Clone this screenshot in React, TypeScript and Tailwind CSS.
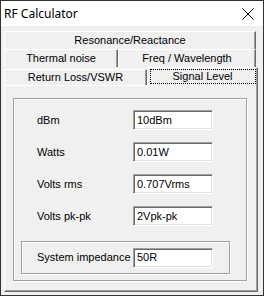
import type { ReactNode } from 'react';

const font = { fontFamily: '"Liberation Sans", Arial, sans-serif' };

function Tab({ children, className = '' }: { children: ReactNode; className?: string }) {
  return (
    <div
      className={`flex items-center justify-center border-l border-t border-r border-l-white border-t-white border-r-[#696969] bg-[#f0f0f0] text-[11px] leading-none text-black shadow-[inset_-1px_0_0_#a0a0a0] ${className}`}
    >
      {children}
    </div>
  );
}

function Field({ value }: { value: string }) {
  return (
    <div className="flex h-[20px] w-[80px] items-center border border-t-[#a0a0a0] border-l-[#a0a0a0] border-r-white border-b-white bg-white pl-[3px] text-[11px] text-black shadow-[inset_1px_1px_0_#696969,inset_-1px_-1px_0_#e3e3e3]">
      {value}
    </div>
  );
}

function Row({ label, value }: { label: string; value: string }) {
  return (
    <div className="flex h-[20px] items-center">
      <span className="w-[119px] pl-[23px] text-[11px] text-black">{label}</span>
      <Field value={value} />
    </div>
  );
}

export default function App() {
  return (
    <div className="flex h-[296px] w-[264px] flex-col border border-[#333] bg-[#f0f0f0]" style={font}>
      {/* title bar */}
      <div className="flex h-[25px] items-center justify-between bg-white pl-[3px] pr-[9px]">
        <span className="text-[12px] text-black" style={{ fontFamily: '"Noto Sans", sans-serif' }}>
          RF Calculator
        </span>
        <svg width="12" height="12" viewBox="0 0 12 12" className="text-black">
          <path d="M0.5 0.5 L11.5 11.5 M11.5 0.5 L0.5 11.5" stroke="currentColor" strokeWidth="1" />
        </svg>
      </div>

      {/* tabs */}
      <div className="mt-[5px] flex flex-col pl-[3px]">
        <div className="flex">
          <Tab className="h-[18px] w-[252px]">Resonance/Reactance</Tab>
        </div>
        <div className="flex">
          <Tab className="h-[18px] w-[114px]">Thermal noise</Tab>
          <Tab className="h-[18px] w-[138px]">Freq / Wavelength</Tab>
        </div>
        <div className="flex items-end">
          <Tab className="h-[16px] w-[143px]">Return Loss/VSWR</Tab>
          <div className="relative z-10 -mb-[1px] flex h-[19px] w-[111px] items-start justify-center border-l border-t border-r border-l-white border-t-white border-r-[#696969] bg-[#f0f0f0] pt-[1px] shadow-[inset_-1px_0_0_#a0a0a0]">
            <div className="flex h-[15px] w-[106px] items-center justify-center border border-dotted border-black text-[11px] leading-none text-black">
              Signal Level
            </div>
          </div>
        </div>
      </div>

      {/* panel */}
      <div className="mb-[3px] ml-[3px] mr-[5px] flex flex-1 flex-col border border-l-white border-t-white border-r-[#696969] border-b-[#696969] pl-[8px] pr-[10px] pt-[12px] pb-[10px] shadow-[inset_-1px_-1px_0_#a0a0a0]">
        <div className="flex flex-1 flex-col gap-[12px] border border-[#a0a0a0] pt-[11px] pb-[6px] shadow-[inset_1px_1px_0_#fff,1px_1px_0_#fff]">
          <Row label="dBm" value="10dBm" />
          <Row label="Watts" value="0.01W" />
          <Row label="Volts rms" value="0.707Vrms" />
          <Row label="Volts pk-pk" value="2Vpk-pk" />
          <div className="ml-[7px] mr-[16px] mt-[3px] flex h-[33px] items-center border border-[#a0a0a0] shadow-[inset_1px_1px_0_#fff,1px_1px_0_#fff]">
            <span className="w-[111px] pl-[15px] text-[11px] text-black">System impedance</span>
            <Field value="50R" />
          </div>
        </div>
      </div>
    </div>
  );
}
